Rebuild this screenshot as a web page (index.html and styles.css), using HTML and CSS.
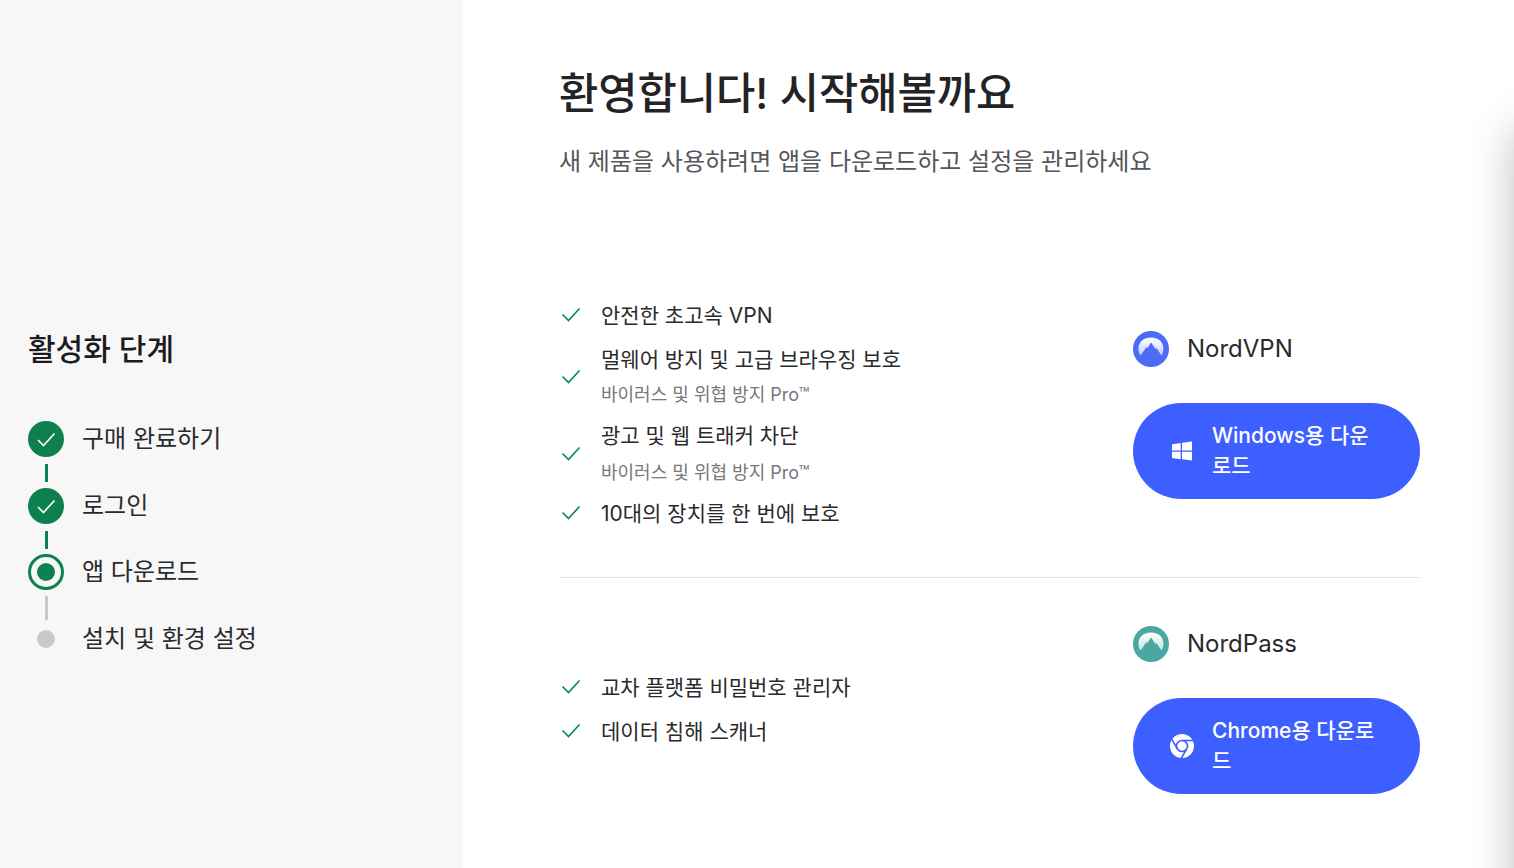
FILE: index.html
```html
<!DOCTYPE html>
<html lang="ko">
<head>
  <meta charset="UTF-8" />
  <meta name="viewport" content="width=device-width, initial-scale=1.0"/>
  <title>활성화 단계</title>
  <link rel="stylesheet" href="styles.css">
</head>
<body>

<aside class="sidebar">
  <h2 class="sidebar-title">활성화 단계</h2>
  <ol class="steps">
    <li class="step done">
      <span class="step-mark">
        <svg viewBox="0 0 24 24" width="24" height="24"><path d="M4 13l5.500 5.500 11-12" fill="none" stroke="#fff" stroke-width="1.6"/></svg>
      </span>
      <span class="step-label">구매 완료하기</span>
    </li>
    <li class="step done">
      <span class="step-mark">
        <svg viewBox="0 0 24 24" width="24" height="24"><path d="M4 13l5.500 5.500 11-12" fill="none" stroke="#fff" stroke-width="1.6"/></svg>
      </span>
      <span class="step-label">로그인</span>
    </li>
    <li class="step current">
      <span class="step-mark"></span>
      <span class="step-label">앱 다운로드</span>
    </li>
    <li class="step todo">
      <span class="step-mark"></span>
      <span class="step-label">설치 및 환경 설정</span>
    </li>
  </ol>
</aside>

<main class="content">
  <h1 class="title">환영합니다! 시작해볼까요</h1>
  <p class="subtitle">새 제품을 사용하려면 앱을 다운로드하고 설정을 관리하세요</p>

  <section class="product first">
    <ul class="features">
      <li>
        <svg class="check" viewBox="0 0 24 24" width="24" height="24"><path d="M3.5 12.5l6 6 11-12" fill="none" stroke="#0e8a55" stroke-width="1.7"/></svg>
        <div>안전한 초고속 VPN</div>
      </li>
      <li>
        <svg class="check" viewBox="0 0 24 24" width="24" height="24"><path d="M3.5 12.5l6 6 11-12" fill="none" stroke="#0e8a55" stroke-width="1.7"/></svg>
        <div>멀웨어 방지 및 고급 브라우징 보호<small>바이러스 및 위협 방지 Pro™</small></div>
      </li>
      <li>
        <svg class="check" viewBox="0 0 24 24" width="24" height="24"><path d="M3.5 12.5l6 6 11-12" fill="none" stroke="#0e8a55" stroke-width="1.7"/></svg>
        <div>광고 및 웹 트래커 차단<small class="tall">바이러스 및 위협 방지 Pro™</small></div>
      </li>
      <li>
        <svg class="check" viewBox="0 0 24 24" width="24" height="24"><path d="M3.5 12.5l6 6 11-12" fill="none" stroke="#0e8a55" stroke-width="1.7"/></svg>
        <div>10대의 장치를 한 번에 보호</div>
      </li>
    </ul>
    <div class="app">
      <div class="app-name">
        <svg viewBox="0 0 36 36" width="36" height="36">
          <defs>
            <linearGradient id="vpnDome" x1="0" y1="0" x2="0" y2="1">
              <stop offset="0" stop-color="#fff"/>
              <stop offset="1" stop-color="#c3cffb"/>
            </linearGradient>
          </defs>
          <circle cx="18" cy="18" r="18" fill="#4a6cf7"/>
          <path d="M7.5 24.500C3.500 18 5 7 18 6.500C31 7 32.500 18 28.500 24.500L23.500 17L22.500 18L18 11.500L14.500 17L13.500 16Z" fill="url(#vpnDome)"/>
        </svg>
        <span class="app-label">NordVPN</span>
      </div>
      <a class="download" href="#">
        <svg viewBox="0 0 24 24" width="24" height="24"><path d="M2 5.200l8.700-1.200v7.500H2zM12 3.800L22 2.400v9.100H12zM2 12.700h8.700v7.500L2 19zM12 12.700h10v8.900l-10-1.400z" fill="#fff"/></svg>
        <span class="download-label">Windows용 다운로드</span>
      </a>
    </div>
  </section>

  <section class="product">
    <ul class="features">
      <li>
        <svg class="check" viewBox="0 0 24 24" width="24" height="24"><path d="M3.5 12.5l6 6 11-12" fill="none" stroke="#0e8a55" stroke-width="1.7"/></svg>
        <div>교차 플랫폼 비밀번호 관리자</div>
      </li>
      <li>
        <svg class="check" viewBox="0 0 24 24" width="24" height="24"><path d="M3.5 12.5l6 6 11-12" fill="none" stroke="#0e8a55" stroke-width="1.7"/></svg>
        <div>데이터 침해 스캐너</div>
      </li>
    </ul>
    <div class="app">
      <div class="app-name">
        <svg viewBox="0 0 36 36" width="36" height="36">
          <defs>
            <linearGradient id="passDome" x1="0" y1="0" x2="0" y2="1">
              <stop offset="0" stop-color="#fff"/>
              <stop offset="1" stop-color="#c5e6e1"/>
            </linearGradient>
          </defs>
          <circle cx="18" cy="18" r="18" fill="#4aa8a0"/>
          <path d="M7.5 24.500C3.500 18 5 7 18 6.500C31 7 32.500 18 28.500 24.500L23.500 17L22.500 18L18 11.500L14.500 17L13.500 16Z" fill="url(#passDome)"/>
        </svg>
        <span class="app-label">NordPass</span>
      </div>
      <a class="download" href="#">
        <svg viewBox="0 0 24 24" width="24" height="24">
          <circle cx="12" cy="12" r="12" fill="#fff"/>
          <g stroke="#3e5fff" stroke-width="1.6" fill="none">
            <path d="M12 6.500H23.500"/>
            <path d="M12 6.500H23.500" transform="rotate(120 12 12)"/>
            <path d="M12 6.500H23.500" transform="rotate(240 12 12)"/>
            <circle cx="12" cy="12" r="5.500"/>
          </g>
        </svg>
        <span class="download-label">Chrome용 다운로드</span>
      </a>
    </div>
  </section>
</main>

<div class="drawer-edge"></div>

</body>
</html>
```

FILE: styles.css
```css
* {
  box-sizing: border-box;
}

html {
  height: 100%;
  overflow: hidden;
}

body {
  margin: 0;
  height: 100%;
  display: flex;
  overflow: hidden;
  position: relative;
  background: #fff;
  color: #2a2a2d;
  font-family: Inter, "Noto Sans CJK KR", sans-serif;
}

.sidebar {
  width: 463px;
  flex-shrink: 0;
  padding: 330px 28px 0;
  background: #f7f7f7;
}

.sidebar-title {
  margin: 0 0 53px;
  font-size: 30px;
  line-height: 38px;
  font-weight: 500;
  color: #1c1c20;
}

.steps {
  margin: 0;
  padding: 0;
  list-style: none;
}

.step {
  position: relative;
  display: flex;
  align-items: center;
  gap: 18px;
  height: 36px;
  margin-bottom: 30.5px;
  font-size: 24px;
}

.step:last-child {
  margin-bottom: 0;
}

.step-label {
  padding-bottom: 5px;
}

.step:not(:last-child)::after {
  content: "";
  position: absolute;
  left: 16.500px;
  top: 43px;
  width: 3px;
  height: 18px;
  background: #0e8050;
}

.step.current::after {
  top: 42px;
  height: 24px;
  background: #c8c9cc;
}

.step-mark {
  width: 36px;
  height: 36px;
  flex-shrink: 0;
  border-radius: 50%;
  display: flex;
  align-items: center;
  justify-content: center;
}

.done .step-mark {
  background: #0e8050;
}

.current .step-mark {
  border: 3px solid #0e8050;
}

.current .step-mark::before {
  content: "";
  width: 18px;
  height: 18px;
  border-radius: 50%;
  background: #0e8050;
}

.todo .step-mark::before {
  content: "";
  width: 18px;
  height: 18px;
  border-radius: 50%;
  background: #c8c9cc;
}

.content {
  flex: 1;
  padding: 64px 94px 0 96px;
}

.title {
  margin: 0;
  font-size: 42.7px;
  line-height: 60px;
  font-weight: 500;
  color: #232326;
}

.subtitle {
  margin: 22px 0 0;
  font-size: 24px;
  line-height: 32px;
  color: #55555a;
}

.product {
  display: flex;
  justify-content: space-between;
  align-items: center;
  padding-top: 48px;
}

.product.first {
  margin-top: 126px;
  padding: 0 0 51px;
  border-bottom: 1px solid #e4e4e6;
}

.features {
  margin: 0;
  padding: 0;
  list-style: none;
  display: flex;
  flex-direction: column;
  gap: 17px;
  font-size: 21px;
  line-height: 24px;
  color: #2a2a2d;
}

.features li {
  display: flex;
  align-items: center;
  gap: 18px;
}

.features li:first-child {
  margin-bottom: 3px;
}

.features small {
  display: block;
  margin-top: 11px;
  font-size: 18px;
  line-height: 24px;
  color: #77777c;
}

.features small.tall {
  margin-top: 13px;
}

.check {
  flex-shrink: 0;
  margin: -2px 0 2px;
}

.app {
  width: 287px;
}

.app-name {
  display: flex;
  align-items: center;
  gap: 18px;
  height: 36px;
  margin-bottom: 36px;
  font-size: 24px;
  color: #2a2a2d;
}

.app-label {
  padding-bottom: 2px;
}

.download {
  display: flex;
  align-items: center;
  gap: 18px;
  height: 96px;
  padding: 0 40px 0 37px;
  border-radius: 48px;
  background: #3e5fff;
  color: #fff;
  font-size: 21px;
  line-height: 30px;
  font-weight: 500;
  text-decoration: none;
  word-break: break-all;
}

.download svg {
  flex-shrink: 0;
}

.download-label {
  padding-bottom: 1px;
}

.drawer-edge {
  position: absolute;
  top: 30px;
  right: -60px;
  bottom: 0;
  width: 60px;
  box-shadow: 0 100px 45px rgba(0, 0, 0, 0.25);
}
```
